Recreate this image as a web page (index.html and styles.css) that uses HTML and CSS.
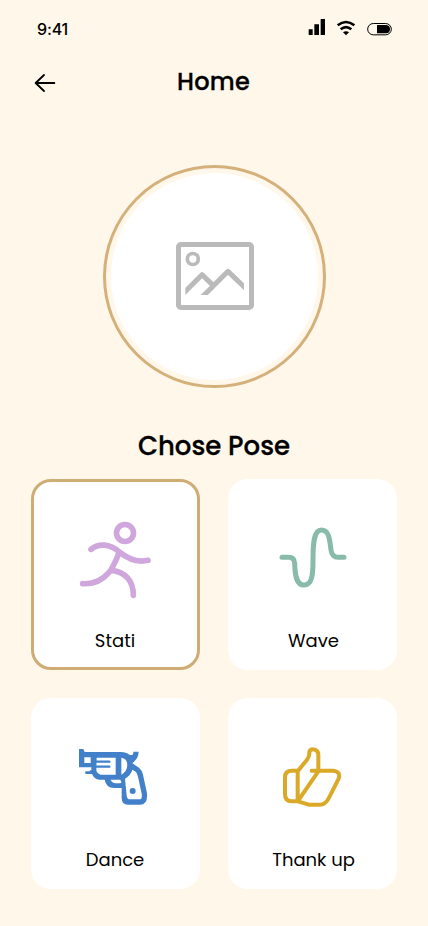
FILE: index.html
```html
<!DOCTYPE html>
<html lang="en">
<head>
<meta charset="utf-8">
<meta name="viewport" content="width=device-width, initial-scale=1">
<title>Home</title>
<link rel="stylesheet" href="styles.css">
</head>
<body>
<main class="screen">
  <div class="status">
    <span class="time">9:41</span>
    <svg class="status-icons" viewBox="0 0 330 120" aria-hidden="true">
      <path d="M41 58h12v17H41zM58 43h14v32H58zM77 27h13v48H77z"/>
      <g fill="none" stroke="#000" stroke-width="8"><path d="M128 46Q153 26 178 46"/><path d="M137 58Q153 45 169 58"/></g>
      <path d="M144 67Q153 60 162 67L153 76z"/>
      <rect x="218" y="40.500" width="71" height="34" rx="17" fill="none" stroke="#000" stroke-width="3"/>
      <path d="M246 45h28q11 2 11 12.500t-11 12.500h-28z"/>
    </svg>
  </div>
  <header class="header">
    <svg class="back" viewBox="0 0 66 60" fill="none" stroke="#000" stroke-width="5.500" stroke-linecap="round" stroke-linejoin="round" role="img" aria-label="Back"><path d="M30 6L5 30l25 24M5 30h56"/></svg>
    <h1 class="title">Home</h1>
  </header>
  <div class="photo">
    <div class="photo-inner">
      <svg class="photo-icon" viewBox="0 0 234 204" fill="none" stroke="#bababa">
        <rect x="7.500" y="7.500" width="219" height="189" rx="7" stroke-width="15"/>
        <circle cx="50.500" cy="51" r="16.500" stroke-width="11"/>
        <path d="M18 158L78 98l34 33" stroke-width="15" stroke-linejoin="round"/>
        <path d="M69 175L156 88 214 144" stroke-width="15" stroke-linejoin="round"/>
        <path d="M15 130h13v45H15zM204 120h15v45h-15zM55 159h60v26H55z" fill="#fff" stroke="none"/>
      </svg>
    </div>
  </div>
  <h2 class="subtitle">Chose Pose</h2>
  <div class="grid">
    <button class="card selected">
      <svg class="icon run" viewBox="0 0 270 300">
        <circle cx="165" cy="69" r="25.500"/>
        <path d="M63 118C84 100 119 100 148 126C174 147 204 158 234 151M148 126C136 157 128 175 117 187C94 214 70 223 38 221M124 181C166 186 190 211 190 256"/>
      </svg>
      <span class="label">Stati</span>
    </button>
    <button class="card">
      <svg class="icon wave" viewBox="0 0 270 255">
        <path d="M36 127H56Q73 127 74 145C75 184 80 210 102 210C126 210 129 180 129 134C129 87 131 45 154 45C177 45 179 72 183 105Q186 127 204 127H222"/>
      </svg>
      <span class="label label-right">Wave</span>
    </button>
    <button class="card">
      <svg class="icon gun" viewBox="0 0 270 225">
        <path class="solid" d="M27 27H40L44 36H153Q169 36 178 44Q191 49 190 35H206Q205 53 194 63Q190 67 187 70L207 83Q216 90 219 104L231 160Q234 194 210 194H174Q155 194 155 174V144H132Q108 143 104 119H88Q72 118 66 102H51Q45 102 45 98T50 94H64V82H27Z"/>
        <path class="cut" d="M43 52H62V69H43ZM80 53H137V104H92Q79 101 79 88ZM154 53Q175 56 171 82Q168 97 154 104ZM122 119H151L154 127Q155 130 149 130H137Q126 129 122 119ZM165 116Q183 105 187 89L197 95Q201 98 204 110L215 161Q218 178 208 178H181Q171 178 170 167Z"/>
        <path class="line" d="M72 65H118M72 80H118M62 94H74"/>
        <circle class="solid" cx="188" cy="153" r="9"/>
      </svg>
      <span class="label">Dance</span>
    </button>
    <button class="card">
      <svg class="icon thumb" viewBox="0 0 270 255">
        <path d="M145 106V60Q145 44 128 43Q117 44 118 56Q118 65 111 74L83 109V198M83 107H65Q45 107 45 127V178Q45 199 65 199H83M125 107H190Q213 110 206 131L176 190Q166 209 149 209H116Q99 203 83 199L145 109"/>
      </svg>
      <span class="label label-right">Thank up</span>
    </button>
  </div>
</main>
</body>
</html>
```
FILE: styles.css
```css
* { box-sizing: border-box; }
body { margin: 0; background: #fff7ea; color: #000; font-family: Poppins, Inter, sans-serif; }
.screen { width: 428px; height: 926px; overflow: hidden; }
.status { display: flex; justify-content: space-between; height: 59px; padding: 10px 23px 0 37px; }
.time { font: 500 16px/20px Inter, sans-serif; margin-top: 9px; letter-spacing: -.15px; }
.status-icons { width: 110px; height: 40px; }
.header { display: grid; grid-template-columns: 40px 1fr 40px; align-items: center; height: 46px; padding: 0 35px 0 34px; }
.back { width: 22px; height: 20px; margin-top: 2px; }
.title { margin: 0; text-align: center; font-size: 24px; font-weight: 500; line-height: 36px; letter-spacing: .2px; -webkit-text-stroke: .3px #000; }
.photo { width: 223px; height: 223px; margin: 60px 0 0 103px; padding: 5px; border: 3px solid #d4b07a; border-radius: 50%; }
.photo-inner { display: flex; justify-content: center; height: 100%; padding-top: 69px; border-radius: 50%; background: #fff; }
.photo-icon { width: 78px; height: 68px; }
.subtitle { margin: 39px 0 13px; text-align: center; font-size: 26px; font-weight: 500; line-height: 39px; -webkit-text-stroke: .3px #000; }
.grid { display: grid; grid-template-columns: 169px 169px; grid-auto-rows: 191px; gap: 28px; padding-left: 31px; }
.card { display: flex; flex-direction: column; align-items: center; justify-content: space-between; padding: 31px 0 16px; border: 0; border-radius: 20px; background: #fff; color: #000; font: inherit; }
.selected { padding: 28px 0 13px; border: 3px solid #cfac74; }
.label { margin-right: 1px; font-size: 18px; line-height: 27px; }
.label-right { margin: 0 0 0 2px; }
.icon { width: 90px; fill: none; stroke-linecap: round; stroke-linejoin: round; }
.run { height: 100px; margin-right: 1px; stroke: #d0a7dc; stroke-width: 17; }
.wave { height: 85px; margin: 5px 0 0 5px; stroke: #89bbaa; stroke-width: 15; }
.gun { height: 75px; margin: 11px 1px 0 0; }
.thumb { height: 85px; margin: 6px 0 0 5px; stroke: #dba928; stroke-width: 12; }
.solid { fill: #4380ca; }
.cut { fill: #fff; }
.line { stroke: #4380ca; stroke-width: 7; }
```
